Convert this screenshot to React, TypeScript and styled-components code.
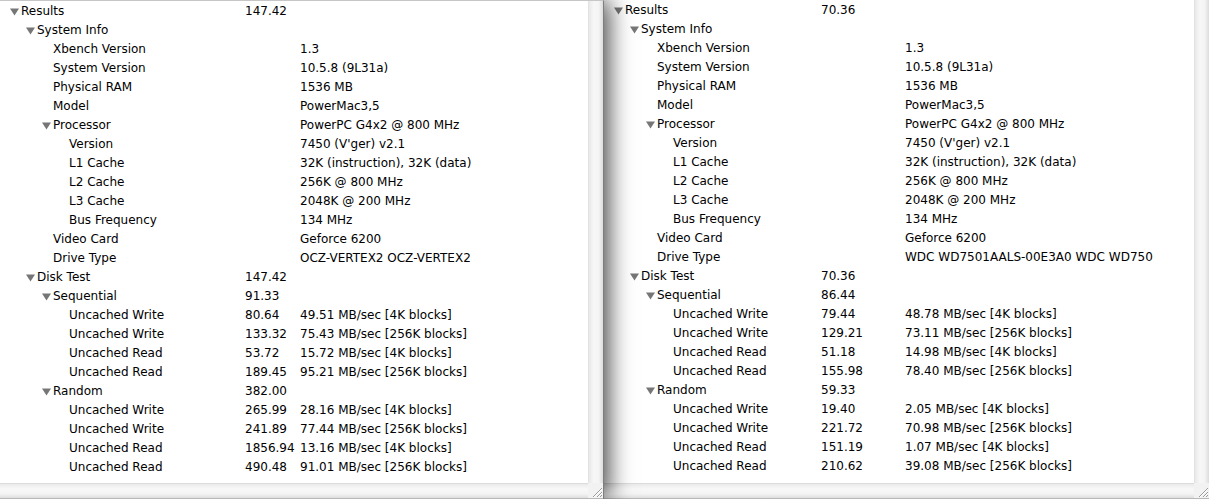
import React from "react";
import styled, { createGlobalStyle } from "styled-components";

interface IRow {
  level: number;
  name: string;
  value?: string;
  detail?: string;
  open?: boolean;
}

interface IPane {
  rows: IRow[];
  valueCol: number;
  detailCol: number;
  front?: boolean;
}

const GlobalStyle = createGlobalStyle`
  html, body {
    margin: 0;
    padding: 0;
    background: #ffffff;
  }
  body {
    font-family: "DejaVu Sans", "Liberation Sans", sans-serif;
    font-size: 12px;
    color: #000;
  }
`;

const Desk = styled.div`
  display: flex;
  width: 1209px;
  height: 499px;
  overflow: hidden;
`;

const Window = styled.div<{ $front?: boolean; $width: number }>`
  position: relative;
  box-sizing: border-box;
  z-index: ${(p) => (p.$front ? 2 : 1)};
  width: ${(p) => p.$width}px;
  flex: none;
  display: grid;
  grid-template-columns: 1fr 15px;
  grid-template-rows: 1fr 16px;
  background: #fff;
  border-top: ${(p) => (p.$front ? "1px solid #c6c6c6" : "none")};
  border-right: ${(p) => (p.$front ? "1px solid #7e7e7e" : "none")};
  box-shadow: ${(p) =>
    p.$front ? "5px 0 22px rgba(0, 0, 0, 0.7)" : "none"};
`;

const Outline = styled.div`
  overflow: hidden;
  background: #fff;
  padding-top: 1px;
`;

const VTrack = styled.div`
  background: linear-gradient(
    to right,
    #e9e9e9 0%,
    #f7f7f7 35%,
    #f4f4f4 70%,
    #dcdcdc 100%
  );
  border-left: 1px solid #e2e2e2;
`;

const HTrack = styled.div`
  background: linear-gradient(
    to bottom,
    #eaeaea 0%,
    #f8f8f8 35%,
    #f4f4f4 70%,
    #dedede 100%
  );
  border-top: 1px solid #dcdcdc;
  border-bottom: 1px solid #b8b8b8;
`;

const Grip = styled.div`
  background: #f2f2f2;
  border-bottom: 1px solid #b8b8b8;
  display: flex;
  align-items: flex-end;
  justify-content: flex-end;
`;

const Row = styled.div<{ $value: number; $detail: number }>`
  display: grid;
  grid-template-columns: ${(p) => p.$value}px ${(p) => p.$detail - p.$value}px 1fr;
  height: 19px;
  line-height: 19px;
  white-space: nowrap;
`;

const Name = styled.div<{ $level: number }>`
  display: flex;
  align-items: center;
  padding-left: ${(p) => 10 + p.$level * 16}px;
  overflow: hidden;
`;

const Toggle = styled.span`
  width: 11px;
  flex: none;
  display: flex;
  align-items: center;
`;

const Cell = styled.div`
  overflow: visible;
`;

const Disclosure = () => (
  <svg width="9" height="8" viewBox="0 0 9 8">
    <path d="M0 0.5 H9 L4.5 7.5 Z" fill="#767676" />
  </svg>
);

const GripLines = () => (
  <svg width="14" height="14" viewBox="0 0 14 14">
    <path
      d="M13 4 L4 13 M13 8 L8 13 M13 11 L11 13"
      stroke="#9a9a9a"
      strokeWidth="1"
      fill="none"
    />
    <path
      d="M13 5 L5 13 M13 9 L9 13"
      stroke="#ffffff"
      strokeWidth="1"
      fill="none"
    />
  </svg>
);

const systemInfo = (drive: string): IRow[] => [
  { level: 1, name: "System Info", open: true },
  { level: 2, name: "Xbench Version", detail: "1.3" },
  { level: 2, name: "System Version", detail: "10.5.8 (9L31a)" },
  { level: 2, name: "Physical RAM", detail: "1536 MB" },
  { level: 2, name: "Model", detail: "PowerMac3,5" },
  { level: 2, name: "Processor", detail: "PowerPC G4x2 @ 800 MHz", open: true },
  { level: 3, name: "Version", detail: "7450 (V'ger) v2.1" },
  { level: 3, name: "L1 Cache", detail: "32K (instruction), 32K (data)" },
  { level: 3, name: "L2 Cache", detail: "256K @ 800 MHz" },
  { level: 3, name: "L3 Cache", detail: "2048K @ 200 MHz" },
  { level: 3, name: "Bus Frequency", detail: "134 MHz" },
  { level: 2, name: "Video Card", detail: "Geforce 6200" },
  { level: 2, name: "Drive Type", detail: drive },
];

const disk = (
  total: string,
  seq: string,
  rnd: string,
  s: string[][],
  r: string[][]
): IRow[] => {
  const names = ["Uncached Write", "Uncached Write", "Uncached Read", "Uncached Read"];
  const blocks = ["[4K blocks]", "[256K blocks]", "[4K blocks]", "[256K blocks]"];
  const leaf = (d: string[][]) =>
    d.map(([v, mb], i) => ({
      level: 3,
      name: names[i],
      value: v,
      detail: `${mb} MB/sec ${blocks[i]}`,
    }));
  return [
    { level: 1, name: "Disk Test", value: total, open: true },
    { level: 2, name: "Sequential", value: seq, open: true },
    ...leaf(s),
    { level: 2, name: "Random", value: rnd, open: true },
    ...leaf(r),
  ];
};

const before: IRow[] = [
  { level: 0, name: "Results", value: "147.42", open: true },
  ...systemInfo("OCZ-VERTEX2 OCZ-VERTEX2"),
  ...disk(
    "147.42",
    "91.33",
    "382.00",
    [
      ["80.64", "49.51"],
      ["133.32", "75.43"],
      ["53.72", "15.72"],
      ["189.45", "95.21"],
    ],
    [
      ["265.99", "28.16"],
      ["241.89", "77.44"],
      ["1856.94", "13.16"],
      ["490.48", "91.01"],
    ]
  ),
];

const after: IRow[] = [
  { level: 0, name: "Results", value: "70.36", open: true },
  ...systemInfo("WDC WD7501AALS-00E3A0 WDC WD750"),
  ...disk(
    "70.36",
    "86.44",
    "59.33",
    [
      ["79.44", "48.78"],
      ["129.21", "73.11"],
      ["51.18", "14.98"],
      ["155.98", "78.40"],
    ],
    [
      ["19.40", "2.05"],
      ["221.72", "70.98"],
      ["151.19", "1.07"],
      ["210.62", "39.08"],
    ]
  ),
];

function ResultPane({ rows, valueCol, detailCol, front }: IPane) {
  return (
    <Window $front={front} $width={front ? 604 : 605}>
      <Outline>
        {rows.map((row, i) => (
          <Row key={i} $value={valueCol} $detail={detailCol}>
            <Name $level={row.level}>
              <Toggle>{row.open && <Disclosure />}</Toggle>
              {row.name}
            </Name>
            <Cell>{row.value}</Cell>
            <Cell>{row.detail}</Cell>
          </Row>
        ))}
      </Outline>
      <VTrack />
      <HTrack />
      <Grip>
        <GripLines />
      </Grip>
    </Window>
  );
}

export default function App() {
  return (
    <>
      <GlobalStyle />
      <Desk>
        <ResultPane rows={before} valueCol={245} detailCol={300} front />
        <ResultPane rows={after} valueCol={217} detailCol={301} />
      </Desk>
    </>
  );
}
